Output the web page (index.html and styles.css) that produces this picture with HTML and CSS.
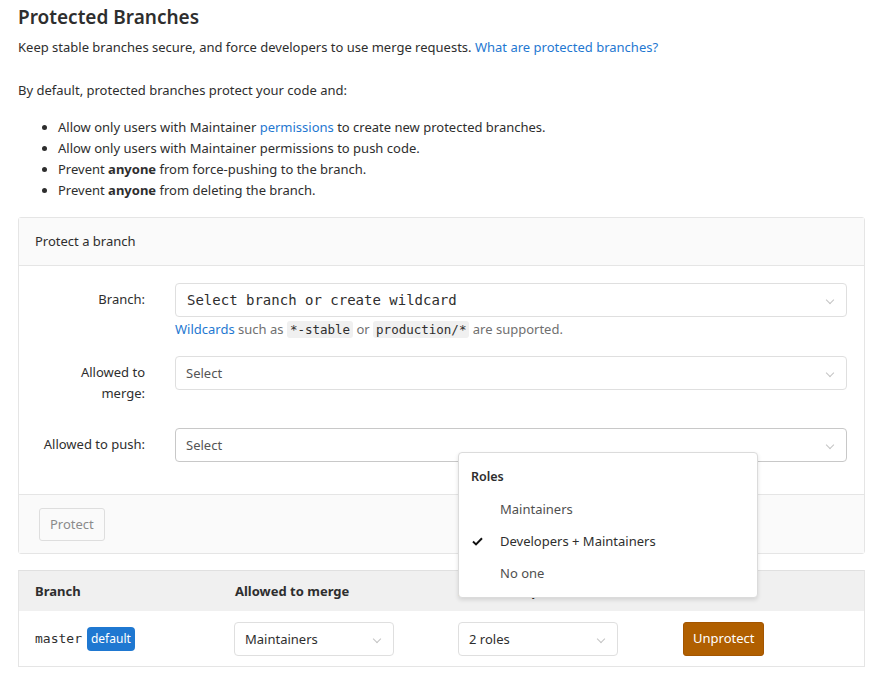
FILE: index.html
```html
<!DOCTYPE html>
<html>
<head>
<meta charset="utf-8">
<link rel="stylesheet" href="styles.css">
</head>
<body>
<div class="page">
  <h1 class="title">Protected Branches</h1>
  <p class="lead">Keep stable branches secure, and force developers to use merge requests. <a class="link" href="#">What are protected branches?</a></p>
  <p class="intro">By default, protected branches protect your code and:</p>
  <ul class="rules">
    <li>Allow only users with Maintainer <a class="link" href="#">permissions</a> to create new protected branches.</li>
    <li>Allow only users with Maintainer permissions to push code.</li>
    <li>Prevent <strong>anyone</strong> from force-pushing to the branch.</li>
    <li>Prevent <strong>anyone</strong> from deleting the branch.</li>
  </ul>

  <div class="card">
    <div class="card-header">Protect a branch</div>
    <div class="card-body">
      <div class="form-row row-branch">
        <label class="form-label">Branch:</label>
        <div class="field">
          <div class="select select-mono">Select branch or create wildcard<span class="chev"></span></div>
          <div class="help"><a class="link" href="#">Wildcards</a> such as <code class="code">*-stable</code> or <code class="code">production/*</code> are supported.</div>
        </div>
      </div>
      <div class="form-row row-merge">
        <label class="form-label">Allowed to<br>merge:</label>
        <div class="field">
          <div class="select select-muted">Select<span class="chev"></span></div>
        </div>
      </div>
      <div class="form-row row-push">
        <label class="form-label">Allowed to push:</label>
        <div class="field field-push">
          <div class="select select-muted select-active">Select<span class="chev"></span></div>
          <div class="dropdown">
            <div class="dropdown-title">Roles</div>
            <div class="dropdown-item">Maintainers</div>
            <div class="dropdown-item is-checked"><svg class="check" width="11" height="9" viewBox="0 0 11 9"><path d="M1 4.6 L4 7.4 L10 1.2" fill="none" stroke="#111" stroke-width="2"/></svg>Developers + Maintainers</div>
            <div class="dropdown-item">No one</div>
          </div>
        </div>
      </div>
    </div>
    <div class="card-footer">
      <button class="btn btn-disabled">Protect</button>
    </div>
  </div>

  <div class="table">
    <div class="table-head">
      <div class="cell c1">Branch</div>
      <div class="cell c2">Allowed to merge</div>
      <div class="cell c3">Allowed to push</div>
      <div class="cell c4"></div>
    </div>
    <div class="table-row">
      <div class="cell c1"><span class="branch-name">master</span><span class="badge">default</span></div>
      <div class="cell c2"><div class="select small-select">Maintainers<span class="chev"></span></div></div>
      <div class="cell c3"><div class="select small-select">2 roles<span class="chev"></span></div></div>
      <div class="cell c4"><button class="btn btn-warning">Unprotect</button></div>
    </div>
  </div>
</div>
</body>
</html>
```

FILE: styles.css
```css
* { box-sizing: border-box; }
html, body { margin: 0; padding: 0; background: #fff; }
body {
  font-family: "Noto Sans", "Open Sans", sans-serif;
  font-size: 13px;
  line-height: 21px;
  color: #2e2e2e;
}
.page { padding: 0 17px 0 18px; }
.title {
  font-size: 19px;
  font-weight: 600;
  line-height: 24px;
  margin: 5px 0 0;
  color: #2e2e2e;
}
.lead { margin: 8px 0 0; }
.intro { margin: 22px 0 0; }
.link { color: #1f78d1; text-decoration: none; }
.rules { margin: 16px 0 0; padding-left: 40px; }
.rules li { line-height: 21px; }
.rules strong { font-weight: 700; }

.card {
  margin-top: 16px;
  border: 1px solid #e5e5e5;
  border-radius: 3px;
}
.card-header {
  background: #fafafa;
  border-bottom: 1px solid #e5e5e5;
  padding: 13px 16px 13px;
  line-height: 21px;
}
.card-body { padding: 17px 17px 32px 16px; }
.form-row { display: flex; gap: 30px; }
.form-label {
  width: 110px;
  flex: none;
  text-align: right;
  padding-top: 6px;
  line-height: 21px;
}
.field { flex: 1; position: relative; }
.row-branch { margin-bottom: 16px; }
.row-merge { margin-bottom: 24px; }
.select {
  position: relative;
  height: 34px;
  border: 1px solid #dfdfdf;
  border-radius: 4px;
  padding: 0 30px 0 10px;
  line-height: 32px;
  background: #fff;
  color: #2e2e2e;
}
.select-mono {
  font-family: "DejaVu Sans Mono", monospace;
  font-size: 14px;
  padding-left: 11px;
}
.select-muted { color: #555; }
.select-active { border-color: #c8c8c8; }
.chev {
  position: absolute;
  right: 13px;
  top: 13px;
  width: 6px;
  height: 6px;
  border-right: 1.5px solid #c4c4c4;
  border-bottom: 1.5px solid #c4c4c4;
  transform: rotate(45deg);
}
.help { margin-top: 2px; line-height: 20px; color: #707070; }
.code {
  font-family: "DejaVu Sans Mono", monospace;
  font-size: 12.5px;
  background: #f0f0f0;
  border-radius: 3px;
  padding: 1px 3px;
  color: #2e2e2e;
}

.dropdown {
  position: absolute;
  left: 283px;
  top: 24px;
  width: 300px;
  background: #fff;
  border: 1px solid #dbdbdb;
  border-radius: 4px;
  box-shadow: 0 2px 4px rgba(0,0,0,0.12);
  padding: 8px 0 8px;
  z-index: 10;
}
.dropdown-title {
  font-weight: 600;
  font-size: 12.5px;
  padding: 5px 12px 6px;
  line-height: 21px;
}
.dropdown-item {
  position: relative;
  padding: 0 0 0 41px;
  line-height: 32px;
  color: #4f4f4f;
}
.dropdown-item.is-checked { color: #2e2e2e; }
.check { position: absolute; left: 13px; top: 12px; }

.card-footer {
  background: #fafafa;
  border-top: 1px solid #e5e5e5;
  padding: 13px 20px 12px;
}
.btn {
  font-family: inherit;
  font-size: 13px;
  line-height: 21px;
  height: 33px;
  padding: 5px 10px;
  border-radius: 3px;
  border: 1px solid #e5e5e5;
  background: #fff;
  color: #2e2e2e;
}
.btn-disabled { color: #8b8b8b; background: #fafafa; border-color: #dedede; }
.btn-warning {
  background: #b05f00;
  border-color: #a35500;
  color: #fff;
  height: 34px;
  padding: 5px 9px;
  font-size: 13px;
}

.table {
  margin-top: 16px;
  border: 1px solid #e5e5e5;
  border-top-color: #e0e0e0;
}
.table-head, .table-row { display: flex; }
.table-head { background: #f0f0f0; height: 40px; align-items: center; font-weight: 700; }
.table-row { height: 55px; align-items: center; }
.cell { padding: 0 16px; flex: none; display: flex; align-items: center; }
.c1 { width: 200px; }
.c2 { width: 224px; }
.c3 { width: 224px; }
.c4 { flex: 1; }
.branch-name { font-family: "DejaVu Sans Mono", monospace; font-size: 13px; color: #2e2e2e; }
.badge {
  margin-left: 5px;
  background: #1f78d1;
  color: #fff;
  border-radius: 4px;
  padding: 0 4px;
  line-height: 24px;
  font-size: 12px;
}
.small-select { width: 160px; margin-left: -1px; }
```
